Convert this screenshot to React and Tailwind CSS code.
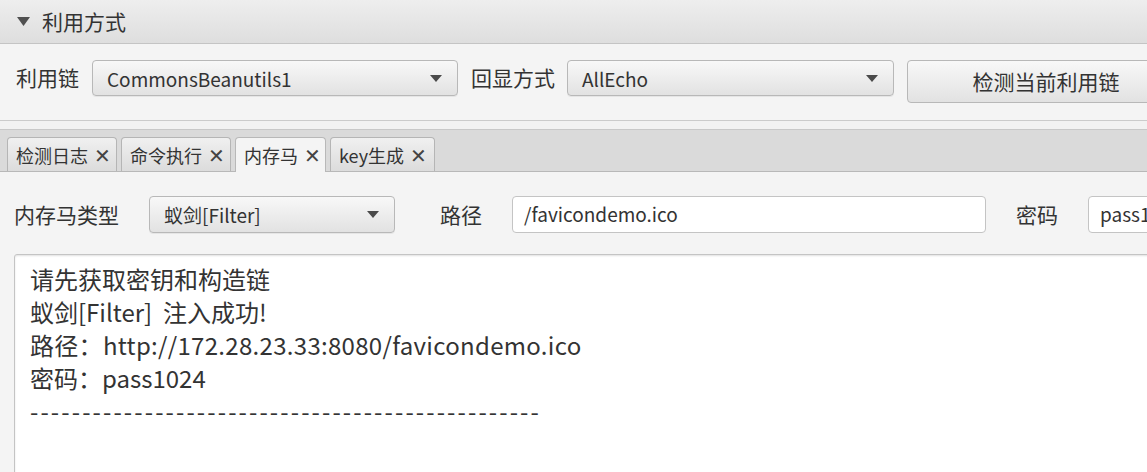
import React from "react";

const FONT = { fontFamily: '"Noto Sans CJK SC", "Noto Sans", sans-serif' };

function Arrow() {
  return (
    <svg width="12" height="7" viewBox="0 0 12 7" className="shrink-0">
      <path d="M0 0 L12 0 L6 7 Z" fill="#4a4a4a" />
    </svg>
  );
}

function Combo({ text, className }) {
  return (
    <div
      className={
        "flex shrink-0 items-center justify-between rounded-[4px] border border-[#b8b8b8] bg-gradient-to-b from-[#f8f8f8] to-[#e2e2e2] pl-[14px] pr-[15px] shadow-[0_1px_0_rgba(0,0,0,0.06)] " +
        className
      }
    >
      <span className="text-[19px] leading-none">{text}</span>
      <Arrow />
    </div>
  );
}

function Tab({ label, selected, w }) {
  return (
    <div
      className={
        "flex shrink-0 items-center gap-[6px] rounded-t-[4px] border border-b-0 pl-[8px] text-[18px] " +
        (selected
          ? "border-[#b8b8b8] bg-[#f4f4f4] -mb-px h-[35px]"
          : "border-[#b5b5b5] bg-gradient-to-b from-[#f0f0f0] to-[#dcdcdc] h-[34px]") +
        " " +
        w
      }
    >
      <span className="leading-none">{label}</span>
      <span className="text-[20px] font-light leading-none text-[#444]">✕</span>
    </div>
  );
}

export default function App() {
  return (
    <div
      className="flex h-[472px] w-[1147px] flex-col overflow-hidden bg-[#f2f2f2] text-[#333]"
      style={FONT}
    >
      {/* Titled pane header */}
      <div className="flex h-[44px] shrink-0 items-center border-b border-[#c4c4c4] bg-gradient-to-b from-[#eeeeee] to-[#dedede] pl-[17px]">
        <svg width="13" height="9" viewBox="0 0 13 9">
          <path d="M0 0 L13 0 L6.5 9 Z" fill="#505050" />
        </svg>
        <span className="ml-[12px] text-[21px] leading-none">利用方式</span>
      </div>

      {/* Titled pane content */}
      <div className="flex h-[77px] shrink-0 items-start border-b border-[#cbcbcb] bg-[#f4f4f4] pl-[16px] pt-[16px]">
        <span className="flex h-[36px] w-[76px] shrink-0 items-center text-[21px]">利用链</span>
        <Combo text="CommonsBeanutils1" className="h-[36px] w-[366px]" />
        <span className="ml-[13px] flex h-[36px] w-[96px] shrink-0 items-center text-[21px]">回显方式</span>
        <Combo text="AllEcho" className="h-[36px] w-[327px]" />
        <div className="ml-[13px] flex h-[43px] w-[260px] shrink-0 items-center justify-center rounded-[4px] border border-[#b8b8b8] bg-gradient-to-b from-[#f8f8f8] to-[#e2e2e2] pl-[18px] text-[21px]">
          检测当前利用链
        </div>
      </div>

      <div className="h-[8px] shrink-0" />

      {/* Tab pane */}
      <div className="flex flex-1 flex-col border-t border-[#c8c8c8]">
        <div className="flex h-[42px] shrink-0 items-end gap-[4px] border-b border-[#b8b8b8] bg-[#dadada] pl-[7px]">
          <Tab label="检测日志" w="w-[110px]" />
          <Tab label="命令执行" w="w-[110px]" />
          <Tab label="内存马" selected w="w-[91px]" />
          <Tab label="key生成" w="w-[105px]" />
        </div>

        <div className="flex flex-1 flex-col bg-[#f4f4f4] pl-[14px]">
          <div className="mt-[24px] flex h-[37px] items-center">
            <span className="w-[135px] shrink-0 text-[21px]">内存马类型</span>
            <Combo text="蚁剑[Filter]" className="h-[37px] w-[246px]" />
            <span className="ml-[45px] w-[72px] shrink-0 text-[21px]">路径</span>
            <div className="flex h-[37px] w-[474px] shrink-0 items-center rounded-[4px] border border-[#c4c4c4] bg-white pl-[11px] text-[19px]">
              /favicondemo.ico
            </div>
            <span className="ml-[30px] w-[72px] shrink-0 text-[21px]">密码</span>
            <div className="flex h-[37px] w-[120px] shrink-0 items-center rounded-[4px] border border-[#c4c4c4] bg-white pl-[11px] text-[19px]">
              pass1024
            </div>
          </div>

          <div className="mt-[21px] h-[260px] w-[1160px] shrink-0 rounded-tl-[3px] border border-[#c4c4c4] bg-white pl-[15px] pt-[7px] text-[24px] leading-[33px] shadow-[inset_0_1px_2px_rgba(0,0,0,0.12)]">
            <div>请先获取密钥和构造链</div>
            <div>蚁剑[Filter]&nbsp;&nbsp;注入成功!</div>
            <div className="tracking-[0.3px]">路径：http://172.28.23.33:8080/favicondemo.ico</div>
            <div>密码：pass1024</div>
            <div className="tracking-[2.1px]">-------------------------------------------------</div>
          </div>
        </div>
      </div>
    </div>
  );
}
